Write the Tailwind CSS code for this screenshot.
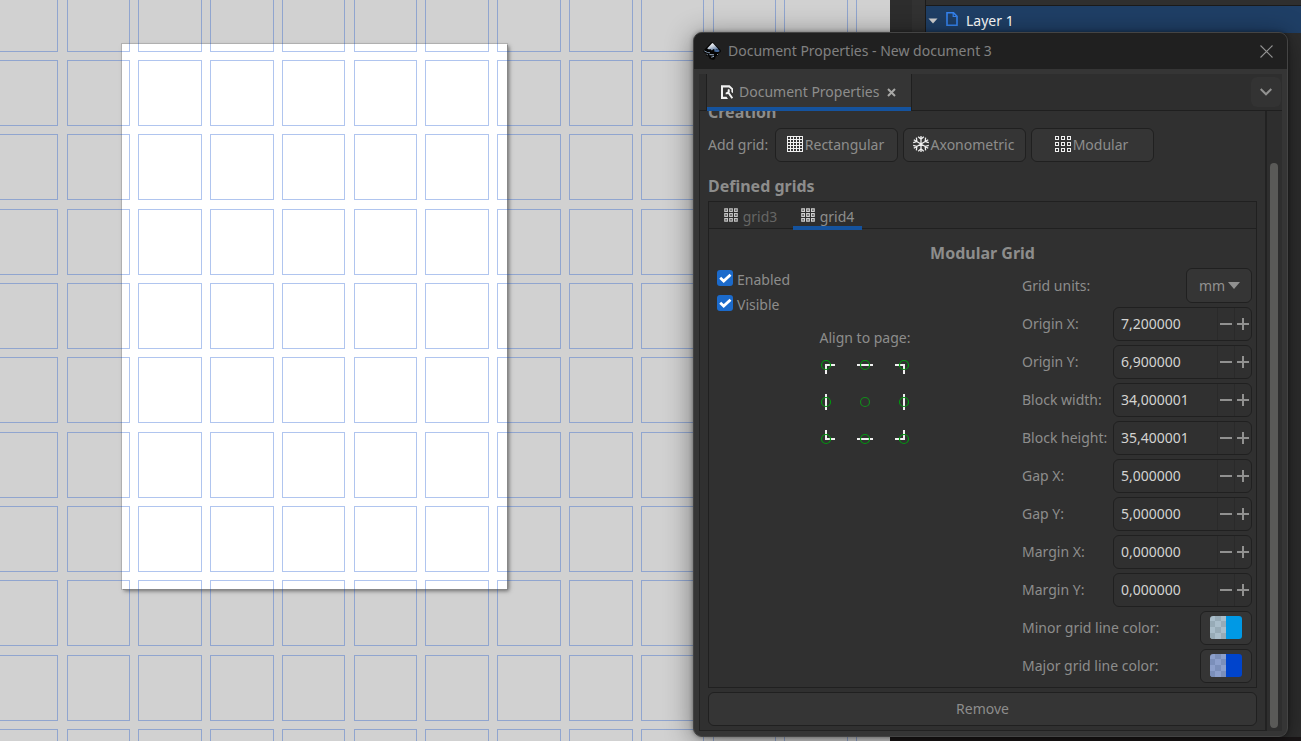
<!DOCTYPE html>
<html lang="en">
<head>
<meta charset="utf-8">
<title>Document Properties</title>
<script src="https://cdn.jsdelivr.net/npm/@tailwindcss/browser@4"></script>
</head>
<body class="relative flex h-screen overflow-hidden bg-[#2e2e2e] font-['Noto_Sans','Open_Sans',sans-serif] text-base leading-5 text-[#8d8d8c]">

<main class="relative min-w-0 flex-1 overflow-hidden bg-[#d1d1d1]">
  <!-- page sheet on the free canvas -->
  <div class="absolute left-[122px] top-[44px] h-[545px] w-[385px] bg-white shadow-[1px_1px_0_#888,0_0_0_1px_#b0b0b0,2px_2px_4px_rgba(0,0,0,0.5)]"></div>
  <svg id="grid" class="absolute inset-0 size-full" fill="none" stroke="#0044cc" stroke-opacity=".31" aria-hidden="true"></svg>
</main>

<aside class="flex w-[411px] flex-col bg-[#2d2d2d]">
  <div class="flex flex-1">
    <div class="w-[22px]"></div>
    <div class="w-[13px] bg-[#323232]"></div>
    <div class="flex-1 border-l border-[#1b1b1b]">
      <div class="h-[6px] border-b border-[#1b1b1b] bg-[#2f2f2f]"></div>
      <div class="flex h-[27px] items-center bg-[#1f3f66] pl-[2px] pt-[2px] text-white">
        <svg class="w-[10px]" viewBox="0 0 10 6" fill="#d0d0d0" aria-hidden="true"><path d="M.5 .5h9L5 5.500z"/></svg>
        <svg class="mb-[3px] ml-[7px] mr-[7px] w-[14px]" viewBox="0 0 14 16" fill="none" stroke="#3584f0" stroke-width="1.600" aria-hidden="true"><path d="M2 1.800h6.500l3.500 3.500v8.900H2z"/><path d="M8.200 2v3.500h3.600" stroke-width="1.200"/></svg>
        <span class="text-sm">Layer 1</span>
      </div>
    </div>
  </div>
  <div class="h-[4px] bg-[#1a1617]"></div>
</aside>

<section role="dialog" aria-labelledby="title" class="absolute bottom-[4px] left-[693px] right-[13px] top-[32px] flex flex-col overflow-hidden rounded-[9px] border border-[#444444] bg-[#353535] shadow-[0_4px_28px_rgba(0,0,0,0.45),0_0_4px_rgba(0,0,0,0.4)]">
  <header class="flex h-[36px] shrink-0 items-center bg-[#202020] pl-[9px] pr-[14px]">
    <svg class="size-[18px]" viewBox="0 0 18 18" aria-hidden="true">
      <defs><linearGradient id="ink" x1=".3" y1="0" x2=".8" y2="1"><stop offset="0" stop-color="#fff"/><stop offset=".45" stop-color="#c3ccd8"/><stop offset="1" stop-color="#4a6c9a"/></linearGradient></defs>
      <path d="M9 .3c.7 0 1.200.4 1.700.9l6.500 6.400c1.500 1.500.5 2.800-1 3.200-1.300.4-1.800.9-1 1.500.6.5.2 1.200-.8 1.500-1.200.3-2 .7-2 1.600 0 1.400-1 2.300-2.900 2.400-1.500-.1-2.100-.8-3-1.200-1-.4-.3-1-.4-1.600-.2-.8-2-.6-3-1.400-.7-.6.6-1.200.3-1.800C2.500 11 .6 10.700.4 9.500c-.1-.8.400-1.300.9-1.800l6-6.400C7.800.7 8.300.3 9 .3z" fill="#050505"/>
      <path d="M9.300 1L4.200 6.400 6 7.500l1.300-.6 1.600 1.700 1.500-1.500 1.800 1 1.900-.8 1-.6L10.200 1.500C9.900 1.200 9.600 1 9.300 1z" fill="url(#ink)"/>
      <path d="M11.500 7.200l1.500.9 2-1.200 1.600 1.800c.2.700-.8 1.200-3.100 1.400l-2.300-.7z" fill="#45699b"/>
      <path d="M1.300 8.900l3.200 1.600 2.500.3" stroke="#9bb2ce" stroke-width=".8" fill="none"/>
      <path d="M6.500 12.600l4.500.2M8.300 15.200l2.700-.8M3.700 12.300l1 .5M14 12.300l.8.300" stroke="#a9c0da" stroke-width=".9" fill="none"/>
    </svg>
    <h1 id="title" class="ml-[7px] flex-1 text-sm text-[#808080]">Document Properties - New document 3</h1>
    <button type="button" aria-label="Close" class="text-[#909090]"><svg class="size-[13px]" viewBox="0 0 13 13" fill="none" stroke="currentColor" stroke-width="1.100"><path d="M.5 .5l12 12M12.500 .5l-12 12"/></svg></button>
  </header>

  <div class="flex min-h-0 flex-1 flex-col px-[5px] pb-[5px] pt-[5px]">
    <div class="flex h-[37px] shrink-0 items-stretch border-b border-[#1f1f1f] bg-[#2e2e2e] pl-[7px]">
      <div class="relative flex items-center border-x border-[#1f1f1f] bg-[#353535] pl-[13px] pr-[15px]">
        <svg class="mr-[5px] h-[16px] w-[14px]" viewBox="0 0 14 16" aria-hidden="true">
          <path d="M1 1.200h8.600L13 4.400v4.800l-1.600-1.300V5.600L9 3.500H3v9.300h3.500l1.500 2.200H1z" fill="#f0f0f0"/>
          <path d="M5.700 9.300c1.400.3 3-.5 3.100-2.200 0-.8-.2-1.300-.6-1.800M8.500 8.700L12.300 14.200" fill="none" stroke="#f0f0f0" stroke-width="2"/>
        </svg>
        <span class="text-sm">Document Properties</span>
        <button type="button" aria-label="Close tab" class="ml-[8px]"><svg class="size-[9px]" viewBox="0 0 9 9" fill="none" stroke="#a8a8a6" stroke-width="2"><path d="M1 1l7 7M8 1l-7 7"/></svg></button>
        <div class="absolute inset-x-0 -bottom-px h-[4px] bg-[#15539e]"></div>
      </div>
      <div class="flex-1"></div>
      <button type="button" aria-label="Tab menu" class="my-[3px] mr-px flex w-[30px] items-center justify-center rounded-md bg-[#333333]"><svg class="h-[8px] w-[12px]" viewBox="0 0 12 8" fill="none" stroke="#919190" stroke-width="2"><path d="M.7 1L6 6.300 11.300 1"/></svg></button>
    </div>

    <div class="flex min-h-0 flex-1 bg-[#2e2e2e]">
      <div class="flex min-w-0 flex-1 flex-col overflow-hidden border-b border-l border-r-2 border-[#222222] bg-[#303030] px-2 pb-[4px]">
        <h2 class="-mt-[9px] h-5 shrink-0 font-bold">Creation</h2>
        <div class="mt-[6px] flex shrink-0 items-center gap-[5px]">
          <span class="w-[62px] text-sm">Add grid:</span>
          <button type="button" class="flex h-[34px] w-[123px] items-center justify-center rounded-md border border-[#202020] bg-[#353535] pr-[2px] text-sm"><svg class="mb-[3px] mr-[2px] size-4 shrink-0" viewBox="0 0 16 16" fill="none" stroke="#f0f0f0" stroke-width="1" shape-rendering="crispEdges" aria-hidden="true"><path d="M.5 .5h15v15H.5zM3.500 0v16M6.500 0v16M9.500 0v16M12.500 0v16M0 3.500h16M0 6.500h16M0 9.500h16M0 12.500h16"/></svg>Rectangular</button>
          <button type="button" class="flex h-[34px] w-[123px] items-center justify-center rounded-md border border-[#202020] bg-[#353535] pr-[2px] text-sm"><svg class="mb-[3px] mr-[2px] size-4 shrink-0" viewBox="0 0 16 16" fill="none" stroke="#f0f0f0" stroke-width="1.300" aria-hidden="true"><path d="M8 0v16M.8 3.800l14.400 8.400M.8 12.200l14.400-8.400M5.200 .8L8 3.200 10.800 .8M5.200 15.200L8 12.800l2.800 2.400M.2 6.600l3.600-1.100L3.400 1.600M.2 9.400l3.600 1.100-.4 3.900M15.800 6.600l-3.600-1.100.4-3.900M15.800 9.400l-3.600 1.100.4 3.900"/></svg>Axonometric</button>
          <button type="button" class="flex h-[34px] w-[123px] items-center justify-center rounded-md border border-[#202020] bg-[#353535] pr-[2px] text-sm"><svg class="mb-[3px] mr-[2px] size-4 shrink-0" viewBox="0 0 16 16" fill="none" stroke="#f0f0f0" shape-rendering="crispEdges" aria-hidden="true"><path d="M.5 .5h3v3h-3zM6.500 .5h3v3h-3zM12.500 .5h3v3h-3zM.5 6.500h3v3h-3zM6.500 6.500h3v3h-3zM12.500 6.500h3v3h-3zM.5 12.500h3v3h-3zM6.500 12.500h3v3h-3zM12.500 12.500h3v3h-3z"/></svg>Modular</button>
        </div>
        <h2 class="mt-[14px] h-5 shrink-0 font-bold">Defined grids</h2>

        <div class="mt-[5px] flex min-h-0 flex-1 flex-col border border-[#202020]">
          <div role="tablist" class="flex h-[27px] shrink-0 border-b border-[#202020] bg-[#2e2e2e] pl-[7px] text-sm">
            <button type="button" role="tab" aria-selected="false" class="flex w-[69px] items-center justify-center gap-[5px] pt-[3px] text-[#666665]"><svg class="mb-[4px] size-[14px]" viewBox="0 0 14 14" fill="none" stroke="#c4c4c4" stroke-width="1.200" aria-hidden="true"><path d="M.8 .8h2.600v2.600H.8zM5.700 .8h2.600v2.600H5.700zM10.600 .8h2.600v2.600h-2.600zM.8 5.700h2.600v2.600H.8zM5.700 5.700h2.600v2.600H5.700zM10.600 5.700h2.600v2.600h-2.600zM.8 10.600h2.600v2.600H.8zM5.700 10.600h2.600v2.600H5.700zM10.600 10.600h2.600v2.600h-2.600z"/></svg>grid3</button>
            <div class="w-[8px]"></div>
            <button type="button" role="tab" aria-selected="true" class="-mb-[2px] flex w-[69px] items-center justify-center gap-[5px] border-b-4 border-[#15539e] pt-[5px]"><svg class="mb-[4px] size-[14px]" viewBox="0 0 14 14" fill="none" stroke="#d0d0d0" stroke-width="1.200" aria-hidden="true"><path d="M.8 .8h2.600v2.600H.8zM5.700 .8h2.600v2.600H5.700zM10.600 .8h2.600v2.600h-2.600zM.8 5.700h2.600v2.600H.8zM5.700 5.700h2.600v2.600H5.700zM10.600 5.700h2.600v2.600h-2.600zM.8 10.600h2.600v2.600H.8zM5.700 10.600h2.600v2.600H5.700zM10.600 10.600h2.600v2.600h-2.600z"/></svg>grid4</button>
          </div>
          <h3 class="mt-[14px] h-5 shrink-0 text-center font-bold">Modular Grid</h3>
          <div class="mt-[5px] flex flex-1 pl-2 pr-[4px]">
            <div class="flex flex-1 flex-col gap-[5px] pt-[2px] text-sm">
              <label class="flex h-5 items-center gap-[4px]"><input type="checkbox" checked class="peer sr-only"><svg class="mb-[4px] size-4" viewBox="0 0 16 16" aria-hidden="true"><rect width="16" height="16" rx="3" fill="#1b6acb"/><path d="M3.200 7.800l3.500 3.200 6.800-6.200" fill="none" stroke="#fff" stroke-width="2.800"/></svg>Enabled</label>
              <label class="flex h-5 items-center gap-[4px]"><input type="checkbox" checked class="peer sr-only"><svg class="mb-[4px] size-4" viewBox="0 0 16 16" aria-hidden="true"><rect width="16" height="16" rx="3" fill="#1b6acb"/><path d="M3.200 7.800l3.500 3.200 6.800-6.200" fill="none" stroke="#fff" stroke-width="2.800"/></svg>Visible</label>
              <div class="mt-[8px] flex flex-col items-center pr-[9px]">
                <span>Align to page:</span>
                <svg class="mt-[9px] h-[90px] w-[90px]" viewBox="820 357 90 90" fill="none" role="img" aria-label="Alignment anchors">
                  <path d="M835 365h-9v9M857 365h16M895 365h9v9M826 394v16M904 394v16M826 430v9h9M857 439h16M904 430v9h-9" stroke="#f0f0f0" stroke-width="2"/>
                  <g stroke="#00980f" stroke-width="1.200"><circle cx="826" cy="365" r="4.500"/><circle cx="865" cy="365" r="4.500"/><circle cx="904" cy="365" r="4.500"/><circle cx="826" cy="402" r="4.500"/><circle cx="865" cy="402" r="4.500" stroke="#128a1a"/><circle cx="904" cy="402" r="4.500"/><circle cx="826" cy="439" r="4.500"/><circle cx="865" cy="439" r="4.500"/><circle cx="904" cy="439" r="4.500"/></g>
                </svg>
              </div>
            </div>
            <div id="fields" class="flex w-[230px] flex-col gap-[4px] text-sm">
              <div class="flex h-[35px] items-center justify-between">
                <label for="units">Grid units:</label>
                <div class="relative h-full w-[66px]">
                  <select id="units" class="size-full appearance-none rounded-md border border-[#202020] bg-[#353535] pl-[12px] text-[#919190]"><option>mm</option></select>
                  <svg class="pointer-events-none absolute right-[12px] top-[14px] w-[12px]" viewBox="0 0 12 7" fill="#919190" aria-hidden="true"><path d="M0 0h12L6 7z"/></svg>
                </div>
              </div>
            </div>
          </div>
        </div>
        <button type="button" class="mt-[4px] h-[34px] shrink-0 rounded-md border border-[#202020] bg-[#353535] text-sm">Remove</button>
      </div>
      <div class="w-[15px] shrink-0 pb-[3px] pl-[3px] pt-[52px]"><div class="h-full w-2 rounded-full bg-[#5a5a58]"></div></div>
    </div>
  </div>
</section>

<template id="spin">
  <div class="flex h-[34px] items-center justify-between">
    <label></label>
    <div class="flex h-full w-[139px] overflow-hidden rounded-md border border-[#202020] bg-[#303030]">
      <input type="text" class="min-w-0 flex-1 bg-transparent pl-[7px] text-[#d3d3d1] outline-none">
      <button type="button" aria-label="Decrease" class="flex w-[17px] items-center justify-center border-l border-[#2a2a2a]"><svg class="size-3" viewBox="0 0 12 12" stroke="#919190" stroke-width="2"><path d="M0 6h12"/></svg></button>
      <button type="button" aria-label="Increase" class="flex w-[17px] items-center justify-center border-l border-[#2a2a2a]"><svg class="size-3" viewBox="0 0 12 12" stroke="#919190" stroke-width="2"><path d="M0 6h12M6 0v12"/></svg></button>
    </div>
  </div>
</template>
<template id="swatch">
  <div class="flex h-[34px] items-center justify-between">
    <label></label>
    <button type="button" class="flex h-full w-[52px] items-center justify-center rounded-md border border-[#202020] bg-[#353535]">
      <svg class="mb-[2px] h-[23px] w-8 rounded-[3px]" viewBox="0 0 32 23" shape-rendering="crispEdges"><rect class="light" width="16" height="23"/><path class="dark" d="M5 0h6v5H5zM0 5h5v6H0zM11 5h5v6h-5zM5 11h6v6H5zM0 17h5v6H0zM11 17h5v6h-5z"/><rect class="solid" x="16" width="16" height="23"/></svg>
    </button>
  </div>
</template>

<script>
  const fields = document.getElementById('fields');
  const spins = [['Origin X:', '7,200000'], ['Origin Y:', '6,900000'], ['Block width:', '34,000001'], ['Block height:', '35,400001'], ['Gap X:', '5,000000'], ['Gap Y:', '5,000000'], ['Margin X:', '0,000000'], ['Margin Y:', '0,000000']];
  spins.forEach(([name, value], i) => {
    const row = document.getElementById('spin').content.cloneNode(true);
    const label = row.querySelector('label'), input = row.querySelector('input');
    label.textContent = name; label.htmlFor = input.id = 'spin' + i; input.value = value;
    fields.append(row);
  });
  const colors = [['Minor grid line color:', '#a9bdca', '#97abb7', '#0099e5'], ['Major grid line color:', '#8c9fcb', '#7b8fba', '#0044cc']];
  colors.forEach(([name, light, dark, solid], i) => {
    const row = document.getElementById('swatch').content.cloneNode(true);
    const label = row.querySelector('label');
    label.textContent = name; label.htmlFor = row.querySelector('button').id = 'color' + i;
    row.querySelector('.light').setAttribute('fill', light);
    row.querySelector('.dark').setAttribute('fill', dark);
    row.querySelector('.solid').setAttribute('fill', solid);
    fields.append(row);
  });

  /* modular grid blocks: [start, end] pixel pairs per column and row */
  const cols = [[-5, 57], [67, 129], [138, 201], [210, 273], [282, 344], [354, 416], [425, 488], [497, 560], [569, 632], [641, 703], [713, 775], [784, 847], [856, 919]];
  const rows = [[-14, 51], [60, 125], [134, 199], [209, 274], [283, 348], [357, 422], [432, 497], [506, 571], [580, 645], [655, 720], [729, 794]];
  const grid = document.getElementById('grid');
  for (const [x1, x2] of cols) for (const [y1, y2] of rows) {
    const r = document.createElementNS('http://www.w3.org/2000/svg', 'rect');
    r.setAttribute('x', x1 + 0.5); r.setAttribute('y', y1 + 0.5);
    r.setAttribute('width', x2 - x1); r.setAttribute('height', y2 - y1);
    grid.append(r);
  }
</script>
</body>
</html>
